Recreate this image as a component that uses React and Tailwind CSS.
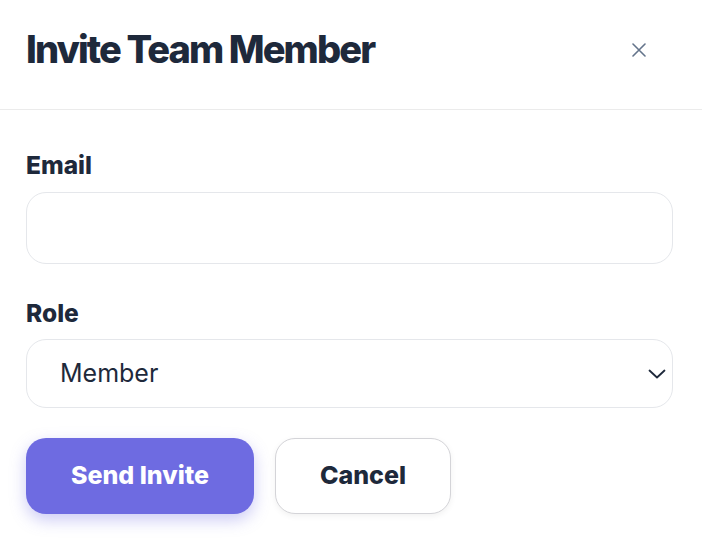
import React from "react";

export default function App() {
  return (
    <div className="w-[702px] h-[544px] bg-white text-[#1e293b] overflow-hidden" style={{ fontFamily: "Inter, 'Noto Sans', sans-serif" }}>
      <div className="flex items-center justify-between h-[110px] pb-[12px] pl-[26px] pr-[43px] border-b border-[#ebebeb]">
        <h1 className="text-[38px] leading-[46px] font-extrabold tracking-[-0.05em]">Invite Team Member</h1>
        <button className="w-[40px] h-[40px] flex items-center justify-center text-[#64748b] mt-[3px]">
          <svg width="14" height="14" viewBox="0 0 14 14" fill="none" stroke="currentColor" strokeWidth="1.6" strokeLinecap="round">
            <path d="M1 1L13 13M13 1L1 13" />
          </svg>
        </button>
      </div>
      <div className="pt-[40px] pl-[26px] pr-[29px]">
        <label className="block text-[24.5px] leading-[30px] font-extrabold">Email</label>
        <input type="email" className="mt-[12px] block w-full h-[72px] rounded-[20px] border border-[#e5e7eb] px-[34px] text-[26px] outline-none" />
        <label className="mt-[34px] block text-[24.5px] leading-[30px] font-extrabold">Role</label>
        <div className="mt-[11px] relative h-[69px] rounded-[20px] border border-[#e5e7eb] flex items-center pl-[33px] pr-[6px]">
          <span className="flex-1 text-[25px]">Member</span>
          <svg width="18" height="10" viewBox="0 0 18 10" fill="none" stroke="#1e293b" strokeWidth="1.8" strokeLinecap="round" strokeLinejoin="round">
            <path d="M1.5 1.5L9 8.5L16.5 1.5" />
          </svg>
        </div>
        <div className="mt-[30px] flex gap-[21px]">
          <button className="w-[228px] h-[76px] rounded-[20px] bg-[#6e6be1] text-white text-[25px] font-extrabold shadow-[0_6px_16px_rgba(110,107,225,0.35)]">Send Invite</button>
          <button className="w-[176px] h-[76px] rounded-[20px] bg-white border border-[#d4d4d8] text-[#1e293b] text-[25px] font-extrabold shadow-[0_2px_6px_rgba(0,0,0,0.06)]">Cancel</button>
        </div>
      </div>
    </div>
  );
}
